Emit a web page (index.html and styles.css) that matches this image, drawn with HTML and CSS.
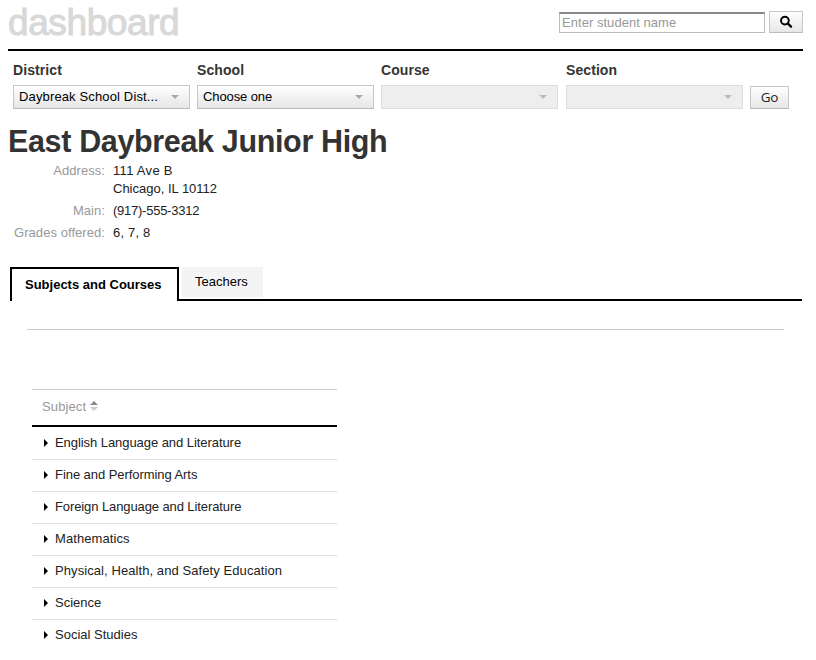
FILE: index.html
```html
<!DOCTYPE html>
<html lang="en">
<head>
<meta charset="utf-8">
<title>Dashboard</title>
<link rel="stylesheet" href="styles.css">
</head>
<body>
<header class="header">
  <div class="logo"><span>dashboard</span></div>
  <form class="search">
    <div class="search-input"><span>Enter student name</span></div>
    <div class="button search-button"><svg width="14" height="14" viewBox="0 0 14 14"><circle cx="5.9" cy="5.6" r="3.9" fill="none" stroke="#000" stroke-width="1.9"/><path d="M8.8 8.5L12 11.7" stroke="#000" stroke-width="2.4" stroke-linecap="round"/></svg></div>
  </form>
</header>
<nav class="filters">
  <div class="filter"><label><span>District</span></label><div class="select"><span class="district-value">Daybreak School Dist...</span><i class="caret"></i></div></div>
  <div class="filter"><label><span>School</span></label><div class="select"><span class="school-value">Choose one</span><i class="caret"></i></div></div>
  <div class="filter course"><label><span>Course</span></label><div class="select disabled"><i class="caret"></i></div></div>
  <div class="filter"><label><span>Section</span></label><div class="select disabled"><i class="caret"></i></div></div>
  <div class="button go"><span>Go</span></div>
</nav>
<main>
  <h1><span>East Daybreak Junior High</span></h1>
  <dl class="info">
    <dt>Address:</dt><dd><span class="street">111 Ave B</span><br>Chicago, IL 10112</dd>
    <dt>Main:</dt><dd class="phone">(917)-555-3312</dd>
    <dt>Grades offered:</dt><dd class="grades">6, 7, 8</dd>
  </dl>
  <div class="tabs">
    <div class="tab active"><span>Subjects and Courses</span></div>
    <div class="tab-rest"><div class="tab"><span>Teachers</span></div></div>
  </div>
  <hr class="rule">
  <section class="table">
    <div class="table-head"><span>Subject</span><svg width="8" height="10" viewBox="0 0 8 10"><path d="M0 4L4 0L8 4Z" fill="#888"/><path d="M0 6H8L4 10Z" fill="#ccc"/></svg></div>
    <div class="row"><i></i><span class="tight">English Language and Literature</span></div>
    <div class="row"><i></i><span class="tight">Fine and Performing Arts</span></div>
    <div class="row"><i></i><span class="tighter">Foreign Language and Literature</span></div>
    <div class="row"><i></i><span class="loose">Mathematics</span></div>
    <div class="row"><i></i><span class="loose">Physical, Health, and Safety Education</span></div>
    <div class="row"><i></i><span>Science</span></div>
    <div class="row last"><i></i><span>Social Studies</span></div>
  </section>
</main>
</body>
</html>
```
FILE: styles.css
```css
* { box-sizing: border-box; }
body {
  margin: 0;
  height: 660px;
  overflow: hidden;
  background: #fff;
  color: #222;
  font: 13px/18px "Liberation Sans", Arial, sans-serif;
  white-space: nowrap;
}
.header {
  display: flex;
  justify-content: space-between;
  width: 795px;
  height: 51px;
  margin-left: 8px;
  border-bottom: 2px solid #000;
}
.logo {
  padding-top: 3px;
  color: #d8d8d8;
  font-size: 37px;
  line-height: 40px;
  letter-spacing: -0.4px;
  -webkit-text-stroke: 1px #d8d8d8;
}
.search { display: flex; gap: 4px; padding-top: 11px; }
.search-input {
  width: 206px;
  height: 21px;
  margin-top: 1px;
  padding-left: 2px;
  border: 1px solid #bbb;
  border-top: 2px solid #888;
  color: #999;
  line-height: 18px;
  letter-spacing: 0.04px;
}
.button {
  display: flex;
  align-items: center;
  justify-content: center;
  border: 1px solid #c8c8c8;
  border-bottom-color: #bbb;
  background: linear-gradient(#fff, #e6e6e6);
}
.search-button { width: 34px; height: 22px; }
.filters { display: flex; gap: 7px; padding-left: 13px; height: 58px; }
.course { margin-right: 1px; }
.filter label {
  display: block;
  height: 34px;
  padding-top: 10px;
  color: #333;
  font-size: 14px;
  font-weight: bold;
  letter-spacing: 0.08px;
}
.select {
  display: flex;
  align-items: center;
  justify-content: space-between;
  width: 177px;
  height: 24px;
  padding: 0 10px 0 5px;
  border: 1px solid #c8c8c8;
  border-bottom-color: #b8b8b8;
  background: linear-gradient(#fff, #e6e6e6);
  color: #000;
}
.district-value { letter-spacing: 0.14px; }
.school-value { letter-spacing: -0.1px; }
.disabled { background: #eee; border-color: #ddd; justify-content: flex-end; }
.caret {
  border: solid transparent;
  border-width: 4px 4px 0;
  border-top-color: #aaa;
}
.disabled .caret { border-top-color: #bbb; }
.go {
  width: 39px;
  height: 23px;
  margin-top: 35px;
  padding-bottom: 1px;
  font: 13.5px/18px "Open Sans", sans-serif;
  letter-spacing: -0.3px;
}
h1 {
  margin: 14px 0 0 8px;
  color: #333;
  font-size: 30.5px;
  line-height: 36px;
  letter-spacing: -0.35px;
}
.info {
  display: grid;
  grid-template-columns: 105px auto;
  gap: 4px 8px;
  margin: 3px 0 0;
}
.info dt { color: #999; text-align: right; letter-spacing: 0.06px; }
.info dd { margin: 0; }
.street { letter-spacing: 0.3px; }
.phone { letter-spacing: -0.25px; }
.info .grades { letter-spacing: 0.2px; }
.tabs { display: flex; width: 792px; height: 34px; margin: 25px 0 0 10px; color: #000; }
.active {
  width: 169px;
  height: 34px;
  padding: 7px 0 0 13px;
  border: solid #000;
  border-width: 2px 2px 0;
  font-weight: bold;
}
.tab-rest { flex: 1; padding-left: 3px; border-bottom: 2px solid #000; }
.tab-rest .tab {
  width: 81px;
  height: 30px;
  padding: 6px 0 0 13px;
  background: #f4f4f4;
}
.rule { width: 757px; height: 1px; margin: 28px 0 0 27px; border: 0; background: #ccc; }
.table { width: 305px; margin: 59px 0 0 32px; }
.table-head {
  display: flex;
  align-items: center;
  gap: 4px;
  height: 38px;
  padding: 0 0 2px 10px;
  border-top: 1px solid #ccc;
  border-bottom: 2px solid #000;
  color: #999;
  letter-spacing: 0.12px;
}
.table-head svg { margin-top: -2px; }
.row {
  display: flex;
  align-items: center;
  gap: 7px;
  height: 32px;
  padding: 0 0 2px 12px;
  border-bottom: 1px solid #ddd;
}
.row:nth-child(2) { height: 33px; padding-bottom: 1px; }
.row i {
  border: solid transparent;
  border-width: 4px 0 4px 4px;
  border-left-color: #000;
}
.tight { letter-spacing: -0.06px; }
.tighter { letter-spacing: -0.1px; }
.loose { letter-spacing: 0.08px; }
.last { border-bottom: 0; padding-bottom: 3px; }
```
